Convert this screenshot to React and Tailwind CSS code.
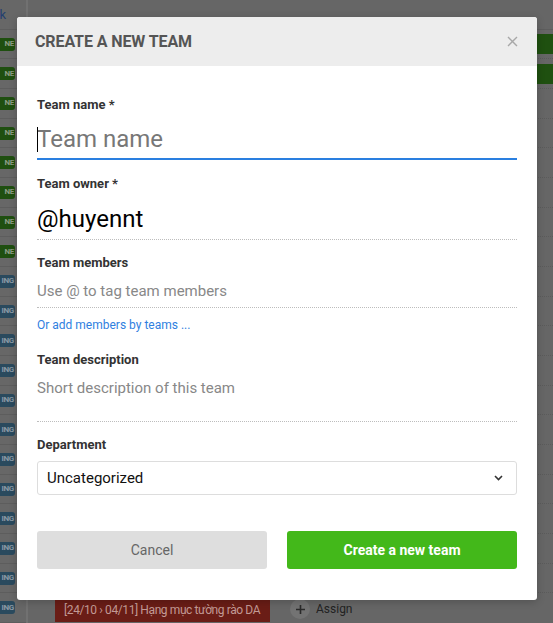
import React from "react";

const font = { fontFamily: "Roboto, 'Noto Sans', Arial, sans-serif" };

function LeftRow({ kind }) {
  const green = kind === "NE";
  return (
    <div className="h-[30px] flex items-center justify-end border-b border-[#5d5d5d] pr-[11px]">
      <div
        className={
          "h-[13px] rounded-r-[3px] flex items-center justify-end pr-[1px] text-[8px] font-bold leading-none tracking-[-0.3px] w-[17px] " +
          (green ? "bg-[#1f4f10] text-[#8c9c86]" : "bg-[#2a4a5e] text-[#8a9aa6]")
        }
      >
        {kind}
      </div>
    </div>
  );
}

function MainRow({ children }) {
  return (
    <div className="h-[30px] flex items-center border-b border-dotted border-[#5b5b5b] relative">
      {children}
    </div>
  );
}

export default function App() {
  const leftRows = [];
  for (let i = 0; i < 8; i++) leftRows.push("NE");
  for (let i = 0; i < 12; i++) leftRows.push("ING");
  const mainRows = Array.from({ length: 19 });

  return (
    <div className="relative w-full h-[623px] overflow-hidden bg-[#666666]" style={font}>
      {/* dimmed page behind */}
      <div className="flex h-full">
        <div className="w-[28px] shrink-0 flex flex-col border-r-2 border-[#717171] bg-[#676767]">
          <div className="h-[30px] flex items-center justify-end pr-[20px] border-b border-[#5d5d5d]">
            <span className="text-[13px] text-[#243f70] leading-none">k</span>
          </div>
          {leftRows.map((k, i) => (
            <LeftRow key={i} kind={k} />
          ))}
        </div>
        <div className="flex-1 flex flex-col">
          <div className="h-[30px] border-b border-[#5d5d5d]" />
          {mainRows.map((_, i) => (
            <MainRow key={i}>
              {i < 2 && <div className="ml-auto h-[20px] w-[200px] bg-[#1f5010]" />}
            </MainRow>
          ))}
          <div className="h-[30px] flex items-start pt-[5px] pl-[27px] gap-[20px]">
            <div className="h-[24px] w-[215px] shrink-0 bg-[#6a1d16] flex items-center pl-[9px] text-[12px] tracking-[-0.4px] text-[#c29a95] whitespace-nowrap overflow-hidden">
              [24/10 › 04/11] Hạng mục tường rào DA
            </div>
            <div className="flex items-center gap-[6px] h-[22px]">
              <div className="w-[20px] h-[20px] rounded-full bg-[#737373] flex items-center justify-center">
                <svg width="11" height="11" viewBox="0 0 11 11">
                  <path d="M5.5 1v9M1 5.5h9" stroke="#2a2a2a" strokeWidth="1.6" />
                </svg>
              </div>
              <span className="text-[12px] text-[#222]">Assign</span>
            </div>
          </div>
        </div>
      </div>

      {/* modal */}
      <div className="absolute left-[17px] top-[17px] w-[520px] bg-white rounded-[3px] overflow-hidden shadow-[0_2px_8px_rgba(0,0,0,0.2)]">
        <div className="h-[49px] bg-[#ededed] flex items-center justify-between pl-[18px] pr-[19px]">
          <h2 className="text-[16px] font-bold text-[#555555] tracking-[-0.1px]">CREATE A NEW TEAM</h2>
          <svg width="11" height="11" viewBox="0 0 11 11">
            <path d="M1 1l9 9M10 1l-9 9" stroke="#a8a8a8" strokeWidth="1.4" />
          </svg>
        </div>
        <div className="px-[20px] pt-[31px] pb-[31px] flex flex-col">
          <label className="text-[13px] leading-[16px] font-bold text-[#333]">Team name *</label>
          <div className="mt-[7px] h-[40px] border-b-2 border-[#2a7fe0] flex items-center relative">
            <span className="absolute left-0 top-[7px] w-[1px] h-[25px] bg-black" />
            <span className="text-[24px] text-[#777777] leading-none">Team name</span>
          </div>

          <label className="mt-[16px] text-[13px] leading-[16px] font-bold text-[#333]">Team owner *</label>
          <div className="mt-[6px] h-[42px] border-b border-dotted border-[#bdbdbd] flex items-center">
            <span className="text-[24px] text-black leading-none">@huyennt</span>
          </div>

          <label className="mt-[15px] text-[13px] leading-[16px] font-bold text-[#333]">Team members</label>
          <div className="mt-[4px] h-[33px] border-b border-dotted border-[#bdbdbd] flex items-center">
            <span className="text-[15px] text-[#888] leading-none">Use @ to tag team members</span>
          </div>
          <a className="mt-[9px] text-[12px] leading-[16px] text-[#2f80e0]">Or add members by teams ...</a>

          <label className="mt-[19px] text-[13px] leading-[16px] font-bold text-[#333]">Team description</label>
          <div className="mt-[4px] h-[50px] border-b border-dotted border-[#bdbdbd] pt-[6px]">
            <span className="block text-[15px] leading-[20px] text-[#888]">Short description of this team</span>
          </div>

          <label className="mt-[15px] text-[13px] leading-[16px] font-bold text-[#333]">Department</label>
          <div className="mt-[8px] h-[34px] border border-[#dddddd] rounded-[3px] flex items-center justify-between pl-[9px] pr-[13px]">
            <span className="text-[15px] text-[#111]">Uncategorized</span>
            <svg width="9" height="6" viewBox="0 0 9 6">
              <path d="M1 1l3.5 3.5L8 1" stroke="#333" strokeWidth="1.6" fill="none" />
            </svg>
          </div>

          <div className="mt-[36px] flex gap-[20px]">
            <button className="flex-1 h-[38px] rounded-[3px] bg-[#dedede] text-[14px] text-[#666]">Cancel</button>
            <button className="flex-1 h-[38px] rounded-[3px] bg-[#43b81a] text-[14px] font-bold text-white">Create a new team</button>
          </div>
        </div>
      </div>
    </div>
  );
}
